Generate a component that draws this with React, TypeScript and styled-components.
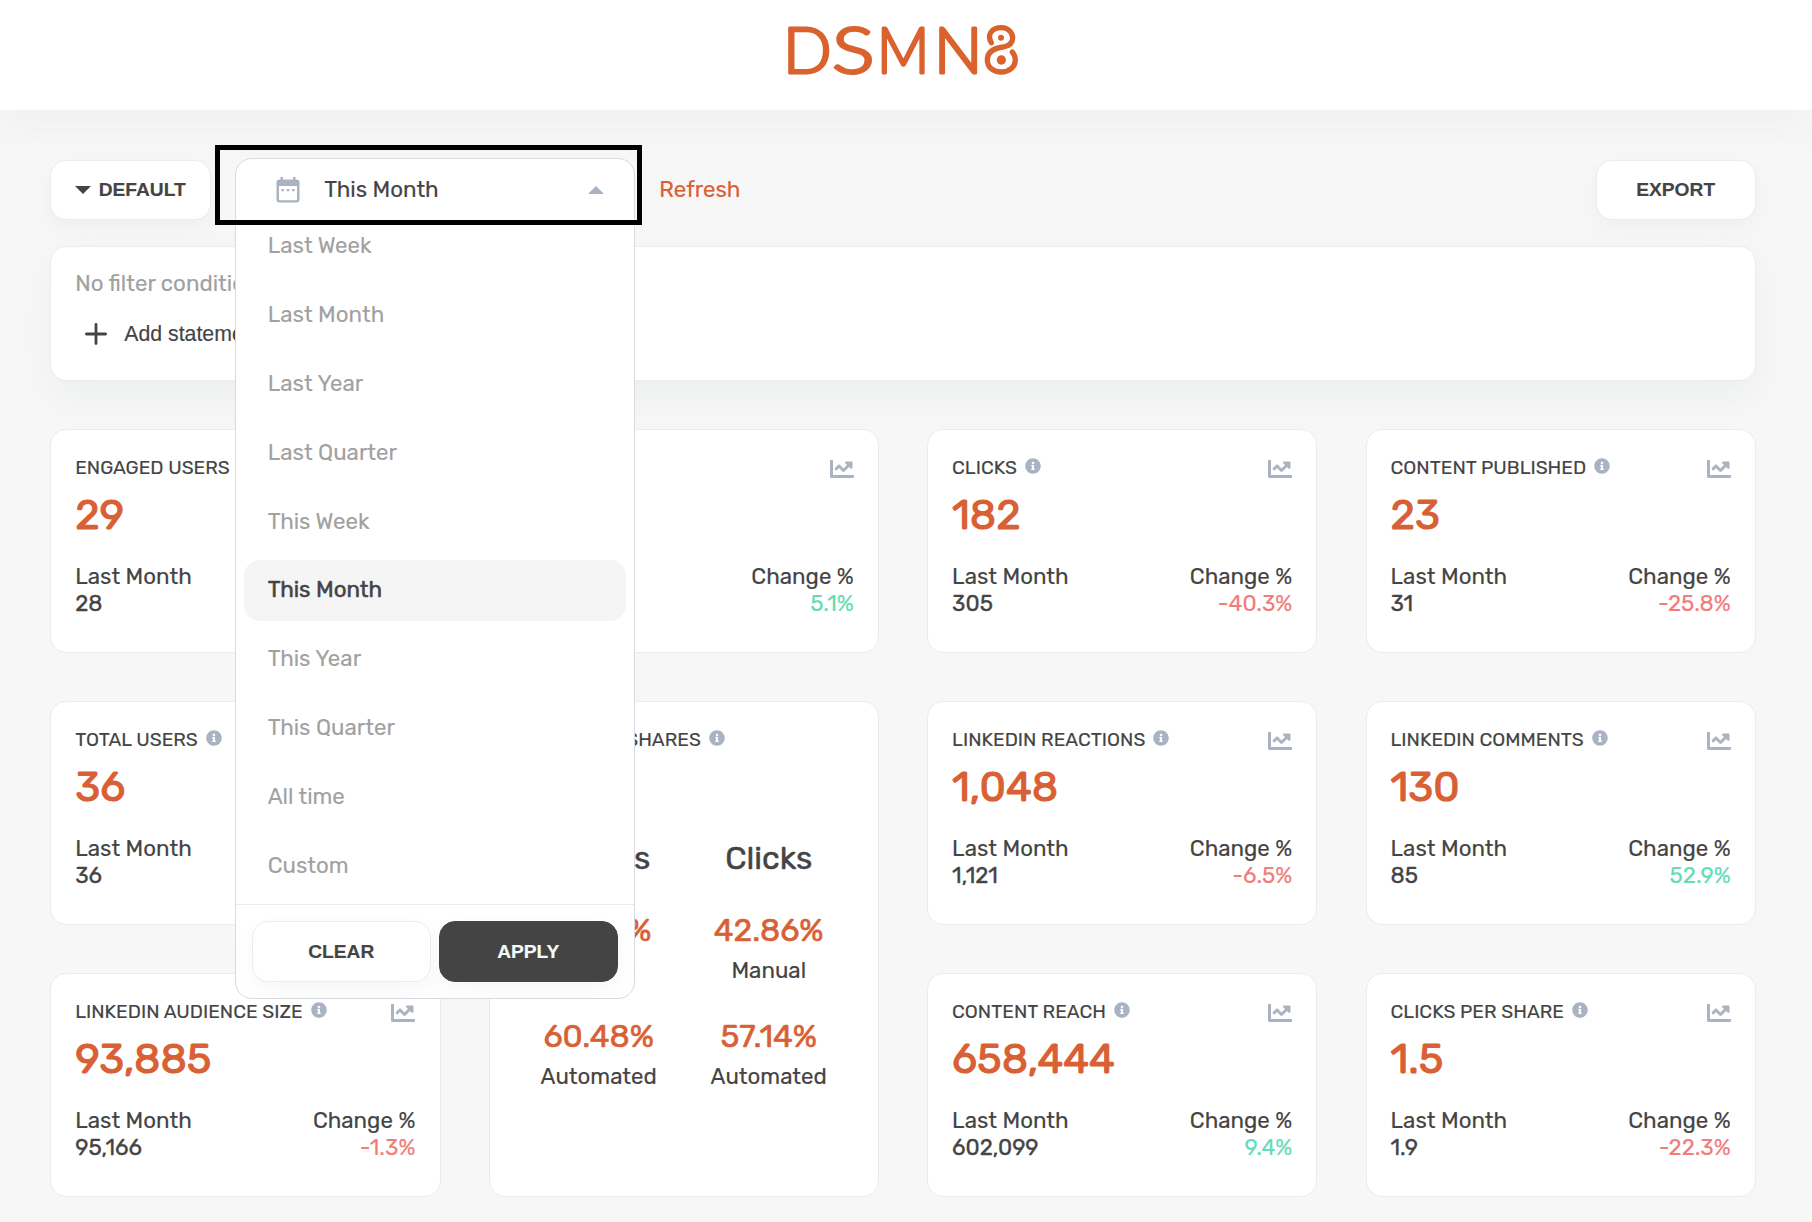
import React from "react";
import styled, { createGlobalStyle } from "styled-components";
import { FaChartLine, FaInfoCircle } from "react-icons/fa";

const color = {
  ink: "#444444",
  muted: "#a1a1a1",
  brand: "#d95f35",
  up: "#65dcb5",
  down: "#f17c7a",
  icon: "#a9b3c1",
  line: "#ebecee",
  page: "#f7f7f7",
};

const GlobalStyle = createGlobalStyle`
  *, *::before, *::after { box-sizing: border-box; }
  body {
    margin: 0;
    background: ${color.page};
    color: ${color.ink};
    font-family: Rubik, Roboto, "Liberation Sans", sans-serif;
    font-size: 22.3px;
    overflow: hidden;
    -webkit-text-stroke: 0.15px;
  }
  button { font: inherit; color: inherit; }
`;

const Page = styled.div`
  height: 1222px;
  overflow: hidden;
`;

const Header = styled.header`
  height: 110px;
  background: #fff;
  box-shadow: 0 18px 40px rgba(95, 125, 115, 0.05);
  display: flex;
  justify-content: center;
  padding: 20px 0 0 0;
`;

const LogoSvg = styled.svg`
  width: 240px;
  height: 60px;
  display: block;
  overflow: visible;
`;

const LogoLetter = styled.text`
  font-family: Lato, sans-serif;
  font-weight: 300;
  font-size: 64px;
  fill: #d9622d;
  stroke: #d9622d;
  stroke-width: 3px;
  stroke-linejoin: round;
`;

const Main = styled.main`
  padding: 50px 56.1px 0 50.2px;
`;

const Toolbar = styled.div`
  display: flex;
  align-items: center;
  height: 60px;
  margin-bottom: 26px;
`;

const Button = styled.button<{ $width: number; $height?: number; $dark?: boolean }>`
  width: ${(p) => p.$width}px;
  height: ${(p) => p.$height ?? 60}px;
  display: flex;
  align-items: center;
  justify-content: center;
  gap: 8px;
  padding: 0 1px 0 0;
  border-radius: 16px;
  border: 1px solid ${(p) => (p.$dark ? color.ink : color.line)};
  background: ${(p) => (p.$dark ? color.ink : "#fff")};
  color: ${(p) => (p.$dark ? "#f1fbfa" : color.ink)};
  box-shadow: 0 8px 18px rgba(95, 120, 130, 0.06);
  font-family: "Liberation Sans", sans-serif;
  font-size: 19.2px;
  font-weight: 700;
  line-height: 1;
`;

const Picker = styled.div`
  position: relative;
  z-index: 2;
  width: 400px;
  height: 60px;
  margin-left: 24.1px;
`;

const Panel = styled.div`
  position: absolute;
  top: -2px;
  left: 0;
  width: 400px;
  height: 841px;
  display: flex;
  flex-direction: column;
  background: #fff;
  border: 1px solid #d8dadf;
  border-radius: 17px;
  overflow: hidden;
`;

const PanelHead = styled.div`
  height: 65px;
  flex: none;
  display: flex;
  align-items: center;
  padding: 0 30px 3px 40px;
  svg:last-child { margin-left: auto; }
`;

const PanelValue = styled.span`
  margin-left: 24px;
  padding-bottom: 2px;
`;

const Highlight = styled.div`
  position: absolute;
  top: -15px;
  left: -20.3px;
  width: 427px;
  height: 80px;
  border: 5px solid #000;
`;

const Options = styled.div`
  flex: 1;
  display: flex;
  flex-direction: column;
  gap: 7.9px;
  padding: 0 8px;
  margin-top: -8px;
`;

const Option = styled.div<{ $active?: boolean }>`
  height: 61px;
  flex: none;
  display: flex;
  align-items: center;
  padding: 0 23.4px 2px;
  border-radius: 16px;
  color: ${(p) => (p.$active ? color.ink : color.muted)};
  background: ${(p) => (p.$active ? "#f5f5f5" : "transparent")};
  -webkit-text-stroke: ${(p) => (p.$active ? "0.5px" : "0.1px")};
`;

const PanelFoot = styled.div`
  height: 94px;
  flex: none;
  border-top: 1px solid #e8eaec;
  padding: 16px 16px 0;
  display: flex;
  gap: 8px;
`;

const Refresh = styled.a`
  margin-left: 24px;
  color: ${color.brand};
  padding-bottom: 2px;
`;

const Spacer = styled.div`
  flex: 1;
`;

const FilterCard = styled.section`
  height: 135px;
  border: 1px solid ${color.line};
  border-radius: 16px;
  background: #fff;
  box-shadow: 0 16px 40px rgba(95, 125, 120, 0.065);
  padding: 23px 24px;
  margin-bottom: 48px;
`;

const FilterHint = styled.div`
  line-height: 28px;
  color: ${color.muted};
`;

const AddStatement = styled.div`
  display: flex;
  align-items: center;
  gap: 17px;
  height: 28px;
  margin: 22px 0 0 10px;
  font-family: "Liberation Sans", sans-serif;
  font-size: 21.3px;
`;

const Grid = styled.div`
  display: grid;
  grid-template-columns: repeat(4, 1fr);
  grid-auto-rows: 223.6px;
  gap: 48.4px 48.1px;
`;

const Card = styled.article<{ $tall?: boolean }>`
  grid-row: span ${(p) => (p.$tall ? 2 : 1)};
  background: #fff;
  border: 1px solid ${color.line};
  border-radius: 16px;
  padding: 25px 24.2px 0 24px;
  white-space: nowrap;
`;

const CardHead = styled.div`
  display: flex;
  align-items: center;
  height: 24px;
  font-size: 19.2px;
  line-height: 24px;
  color: ${color.icon};
`;

const CardTitle = styled.span<{ $tight?: boolean }>`
  color: ${color.ink};
  padding-top: 2px;
  margin-right: 8px;
  word-spacing: ${(p) => (p.$tight ? "-4.6px" : "normal")};
`;

const InfoIcon = styled(FaInfoCircle)`
  width: 16px;
  height: 16px;
  margin-top: -2px;
`;

const TrendIcon = styled(FaChartLine)`
  width: 24px;
  height: 24px;
  margin: 4px 0 0 auto;
`;

const Figure = styled.div`
  margin-top: 10px;
  height: 52px;
  line-height: 52px;
  font-size: 41.5px;
  -webkit-text-stroke: 1.1px;
  color: ${color.brand};
`;

const Compare = styled.div`
  display: flex;
  justify-content: space-between;
  margin-top: 22px;
  line-height: 27px;
`;

const Side = styled.div<{ $end?: boolean }>`
  margin-left: ${(p) => (p.$end ? "auto" : "0")};
  text-align: ${(p) => (p.$end ? "right" : "left")};
`;

const Line = styled.div<{ $tone?: "up" | "down" }>`
  color: ${(p) => (p.$tone ? color[p.$tone] : "inherit")};
`;

const Total = styled(Line)`
  -webkit-text-stroke: 0.35px;
`;

const Split = styled.div`
  display: grid;
  grid-template-columns: 170px 170px;
  justify-content: center;
  text-align: center;
  margin-top: 86px;
`;

const SplitTitle = styled.div`
  height: 42px;
  line-height: 42px;
  font-size: 32px;
  margin-bottom: 31px;
  -webkit-text-stroke: 0.5px;
`;

const SplitValue = styled.div`
  height: 40px;
  line-height: 40px;
  font-size: 31.8px;
  -webkit-text-stroke: 0.6px;
  color: ${color.brand};
`;

const SplitLabel = styled.div`
  height: 40px;
  line-height: 42px;
  margin-bottom: 26px;
`;

type CardData = {
  title: string;
  value?: string;
  last?: string;
  change?: string;
  split?: boolean;
};

const cards: CardData[] = [
  { title: "ENGAGED USERS", value: "29", last: "28" },
  { title: "SHARES", change: "5.1%" },
  { title: "CLICKS", value: "182", last: "305", change: "-40.3%" },
  { title: "CONTENT PUBLISHED", value: "23", last: "31", change: "-25.8%" },
  { title: "TOTAL USERS", value: "36", last: "36" },
  { title: "AUTOMATED SHARES", split: true },
  { title: "LINKEDIN REACTIONS", value: "1,048", last: "1,121", change: "-6.5%" },
  { title: "LINKEDIN COMMENTS", value: "130", last: "85", change: "52.9%" },
  { title: "LINKEDIN AUDIENCE SIZE", value: "93,885", last: "95,166", change: "-1.3%" },
  { title: "CONTENT REACH", value: "658,444", last: "602,099", change: "9.4%" },
  { title: "CLICKS PER SHARE", value: "1.5", last: "1.9", change: "-22.3%" },
];

const ranges = [
  "Last Week", "Last Month", "Last Year", "Last Quarter", "This Week",
  "This Month", "This Year", "This Quarter", "All time", "Custom",
];

const Logo = () => (
  <LogoSvg viewBox="786 20 240 60" aria-label="DSMN8">
    <LogoLetter x="783" y="72.6">D</LogoLetter>
    <LogoLetter x="835" y="72.6" transform="translate(836.3) scale(1.243 1) translate(-838.4)">S</LogoLetter>
    <LogoLetter x="875" y="72.6" transform="translate(881) scale(0.9 1) translate(-879.5)">M</LogoLetter>
    <LogoLetter x="934" y="72.6">N</LogoLetter>
    <g transform="translate(760 0) scale(0.33333)">
      <path
        d="M694 128C680 106 694 83 724 83C745 83 758 98 758 114C758 130 746 138 730 141C705 144 682 152 682 180C682 203 701 216 724 216C748 216 766 200 766 180C766 170 762 162 757 156"
        fill="none"
        stroke="#d9622d"
        strokeWidth="16"
        strokeLinecap="round"
      />
      <circle cx="723" cy="113" r="9" fill="#d9622d" />
      <circle cx="724" cy="180" r="14" fill="#d9622d" />
    </g>
  </LogoSvg>
);

const CalendarIcon = () => (
  <svg width="24" height="26" viewBox="0 0 24 26" fill={color.icon}>
    <path
      fillRule="evenodd"
      d="M4.5 0H7v2.5h10V0h2.500v2.500h1A3 3 0 0 1 23.500 5.500v17a3 3 0 0 1-3 3h-17a3 3 0 0 1-3-3v-17a3 3 0 0 1 3-3h1ZM3 9v13.200a1 1 0 0 0 1 1h16a1 1 0 0 0 1-1V9Z"
    />
    <path d="M5.500 12H8v2.300H5.500ZM10.800 12h2.500v2.300h-2.500ZM16 12h2.500v2.300H16Z" />
  </svg>
);

const Caret = ({ up }: { up?: boolean }) => (
  <svg width="16" height="8" viewBox="0 0 16 8" fill={up ? color.icon : color.ink}>
    <path d={up ? "M0 8 8 0l8 8Z" : "M0 0h16L8 8Z"} />
  </svg>
);

const PlusIcon = () => (
  <svg width="22" height="22" viewBox="0 0 22 22" stroke={color.ink} strokeWidth="2.8" strokeLinecap="round">
    <path d="M11 1.400v19.200M1.400 11h19.200" />
  </svg>
);

const SplitCell = ({ value, label }: { value: string; label: string }) => (
  <div>
    <SplitValue>{value}</SplitValue>
    <SplitLabel>{label}</SplitLabel>
  </div>
);

const MetricCard = ({ title, value, last, change, split }: CardData) => (
  <Card $tall={split}>
    <CardHead>
      <CardTitle $tight={split}>{title}</CardTitle>
      <InfoIcon />
      {!split && <TrendIcon />}
    </CardHead>
    {split ? (
      <Split>
        <SplitTitle>Shares</SplitTitle>
        <SplitTitle>Clicks</SplitTitle>
        <SplitCell value="39.52%" label="Manual" />
        <SplitCell value="42.86%" label="Manual" />
        <SplitCell value="60.48%" label="Automated" />
        <SplitCell value="57.14%" label="Automated" />
      </Split>
    ) : (
      <>
        <Figure>{value}</Figure>
        <Compare>
          {last && (
            <Side>
              <Line>Last Month</Line>
              <Total>{last}</Total>
            </Side>
          )}
          {change && (
            <Side $end>
              <Line>Change %</Line>
              <Line $tone={change.startsWith("-") ? "down" : "up"}>{change}</Line>
            </Side>
          )}
        </Compare>
      </>
    )}
  </Card>
);

export default function App() {
  return (
    <Page>
      <GlobalStyle />
      <Header>
        <Logo />
      </Header>
      <Main>
        <Toolbar>
          <Button $width={161}>
            <Caret />
            DEFAULT
          </Button>
          <Picker>
            <Panel>
              <PanelHead>
                <CalendarIcon />
                <PanelValue>This Month</PanelValue>
                <Caret up />
              </PanelHead>
              <Options>
                {ranges.map((r) => (
                  <Option key={r} $active={r === "This Month"}>
                    {r}
                  </Option>
                ))}
              </Options>
              <PanelFoot>
                <Button $width={179} $height={61}>CLEAR</Button>
                <Button $width={179} $height={61} $dark>APPLY</Button>
              </PanelFoot>
            </Panel>
            <Highlight />
          </Picker>
          <Refresh>Refresh</Refresh>
          <Spacer />
          <Button $width={159.5}>EXPORT</Button>
        </Toolbar>
        <FilterCard>
          <FilterHint>No filter conditions added</FilterHint>
          <AddStatement>
            <PlusIcon />
            Add statement
          </AddStatement>
        </FilterCard>
        <Grid>
          {cards.map((c) => (
            <MetricCard key={c.title} {...c} />
          ))}
        </Grid>
      </Main>
    </Page>
  );
}
